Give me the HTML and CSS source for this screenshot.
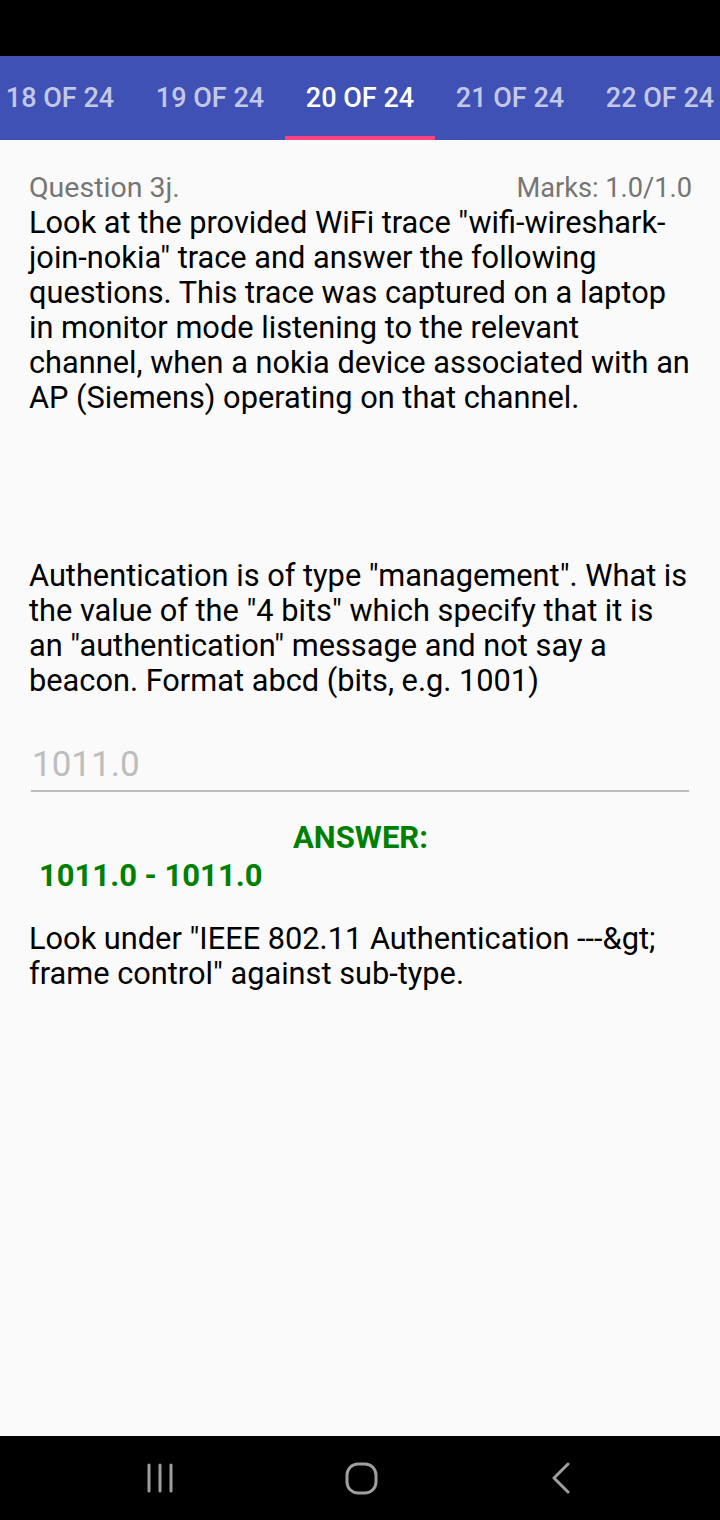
FILE: index.html
```html
<!DOCTYPE html>
<html>
<head>
<meta charset="utf-8">
<link rel="stylesheet" href="styles.css">
</head>
<body>
<div class="screen">
  <div class="statusbar"></div>
  <div class="tabbar">
    <div class="tabs">
      <div class="tab">18 OF 24</div>
      <div class="tab">19 OF 24</div>
      <div class="tab active">20 OF 24</div>
      <div class="tab">21 OF 24</div>
      <div class="tab">22 OF 24</div>
    </div>
  </div>
  <div class="content">
    <div class="qhead">
      <span class="qnum">Question 3j.</span>
      <span class="marks">Marks: 1.0/1.0</span>
    </div>
    <p class="text intro">Look at the provided WiFi trace "wifi-wireshark-join-nokia" trace and answer the following questions. This trace was captured on a laptop in monitor mode listening to the relevant channel, when a nokia device associated with an AP (Siemens) operating on that channel.</p>
    <p class="text question">Authentication is of type "management". What is the value of the "4 bits" which specify that it is an "authentication" message and not say a beacon. Format abcd (bits, e.g. 1001)</p>
    <div class="input">1011.0</div>
    <div class="answer-title">ANSWER:</div>
    <div class="answer-value">1011.0 - 1011.0</div>
    <p class="text hint">Look under "IEEE 802.11 Authentication ---&amp;gt; frame control" against sub-type.</p>
  </div>
  <div class="navbar">
    <svg class="nav-icon recent" width="28" height="30" viewBox="0 0 28 30">
      <g stroke="#9e9e9e" stroke-width="3" stroke-linecap="round">
        <line x1="3" y1="2" x2="3" y2="28"/>
        <line x1="14" y1="2" x2="14" y2="28"/>
        <line x1="25" y1="2" x2="25" y2="28"/>
      </g>
    </svg>
    <svg class="nav-icon home" width="33" height="33" viewBox="0 0 33 33">
      <rect x="2" y="2" width="29" height="29" rx="11" fill="none" stroke="#9e9e9e" stroke-width="3"/>
    </svg>
    <svg class="nav-icon back" width="20" height="32" viewBox="0 0 20 32">
      <polyline points="17,2 3,16 17,30" fill="none" stroke="#9e9e9e" stroke-width="3" stroke-linecap="round" stroke-linejoin="round"/>
    </svg>
  </div>
</div>
</body>
</html>
```

FILE: styles.css
```css
* { box-sizing: border-box; }
html, body { margin: 0; padding: 0; }
body {
  font-family: Roboto, "Noto Sans", sans-serif;
  background: #fafafa;
}
.screen {
  width: 720px;
  height: 1520px;
  display: flex;
  flex-direction: column;
  overflow: hidden;
}
.statusbar {
  height: 56px;
  background: #000;
  flex: none;
}
.tabbar {
  height: 84px;
  background: #3f51b5;
  flex: none;
  overflow: hidden;
}
.tabs {
  display: flex;
  margin-left: -15px;
  height: 100%;
}
.tab {
  flex: none;
  width: 150px;
  height: 100%;
  display: flex;
  align-items: center;
  justify-content: center;
  font-size: 27px;
  font-weight: 500;
  color: rgba(255,255,255,0.7);
  padding-top: 4px;
  border-bottom: 4px solid transparent;
}
.tab.active {
  color: #fff;
  border-bottom-color: #ff4081;
}
.content {
  flex: 1;
  padding: 32px 28px 0 29px;
  color: #000;
}
.qhead {
  display: flex;
  justify-content: space-between;
  align-items: baseline;
  color: #757575;
  font-size: 28.5px;
  line-height: 32px;
}
.marks { font-size: 27.2px; }
.text {
  margin: 0;
  font-size: 30.75px;
  line-height: 35px;
}
.intro { margin-top: 1px; }
.question { margin-top: 143px; }
.input {
  margin: 47px 3px 0 2px;
  font-size: 35px;
  line-height: 40px;
  color: #bdbdbd;
  padding-left: 1px;
  padding-bottom: 5px;
  border-bottom: 2px solid #bdbdbd;
}
.answer-title {
  margin-top: 28px;
  text-align: center;
  color: #008000;
  font-weight: 700;
  font-size: 31px;
  line-height: 36px;
}
.answer-value {
  margin-left: 10px;
  color: #008000;
  font-weight: 700;
  font-size: 31px;
  line-height: 39px;
}
.hint { margin-top: 26px; }
.navbar {
  height: 84px;
  background: #000;
  flex: none;
  display: flex;
  align-items: center;
  padding-left: 146px;
}
.nav-icon { display: block; flex: none; }
.home { margin-left: 171px; }
.back { margin-left: 173px; }
```
